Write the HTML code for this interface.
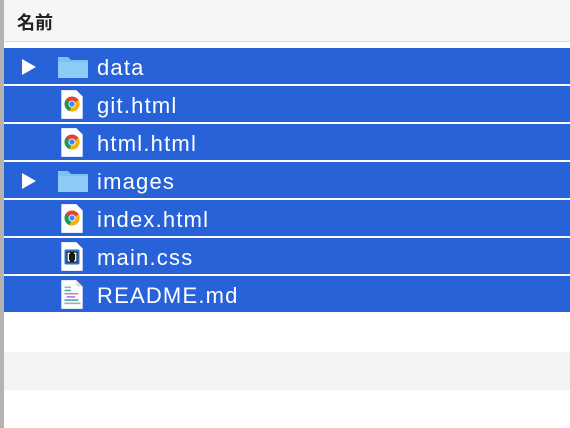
<!DOCTYPE html>
<html><head><meta charset="utf-8"><style>
body{margin:0;width:570px;height:428px;background:#fff;position:relative;overflow:hidden;font-family:"Liberation Sans","Noto Sans CJK JP",sans-serif}
.lb{position:absolute;left:0;top:0;width:4px;height:428px;background:#b3b3b3}
.hd{position:absolute;left:4px;top:0;right:0;height:41px;background:#f6f6f6;border-bottom:1px solid #d8d8d8}
.hd span{position:absolute;left:13px;top:9px;font-size:18px;color:#222;font-weight:bold}
.row{position:absolute;left:4px;right:0;height:36px;background:#2762d8;color:#fff;font-size:22px;letter-spacing:1.2px}
.row .t{position:absolute;left:93px;top:7px}
.tri{position:absolute;left:18px;top:11px;width:0;height:0;border-left:14px solid #fff;border-top:8px solid transparent;border-bottom:8px solid transparent}
.gb{position:absolute;left:4px;right:0;top:352px;height:38px;background:#f3f4f4}
svg{position:absolute}
</style></head><body>
<div class="lb"></div>
<div class="hd"><span>名前</span></div>

<div class="row" style="top:48px"><div class="tri"></div>
<svg style="left:53px;top:7px" width="32" height="24" viewBox="0 0 32 24"><path d="M1 2h10l3 3h17v18H1z" fill="#7cc1f2"/><path d="M1 7h30v16H1z" fill="#8ccbf5"/></svg>
<span class="t">data</span></div>

<div class="row" style="top:86px">
<svg style="left:56px;top:3px" width="24" height="31" viewBox="0 0 22 29"><path d="M1 1h14l6 6v21H1z" fill="#fff"/><circle cx="11" cy="14" r="7" fill="#db4437"/><path d="M11 14L5 10.5A7 7 0 0 0 9 20.7z" fill="#0f9d58"/><path d="M11 14l6-3.5A7 7 0 0 1 9 20.7z" fill="#f4b400"/><circle cx="11" cy="14" r="3.3" fill="#fff"/><circle cx="11" cy="14" r="2.5" fill="#4285f4"/></svg>
<span class="t">git.html</span></div>

<div class="row" style="top:124px">
<svg style="left:56px;top:3px" width="24" height="31" viewBox="0 0 22 29"><path d="M1 1h14l6 6v21H1z" fill="#fff"/><circle cx="11" cy="14" r="7" fill="#db4437"/><path d="M11 14L5 10.5A7 7 0 0 0 9 20.7z" fill="#0f9d58"/><path d="M11 14l6-3.5A7 7 0 0 1 9 20.7z" fill="#f4b400"/><circle cx="11" cy="14" r="3.3" fill="#fff"/><circle cx="11" cy="14" r="2.5" fill="#4285f4"/></svg>
<span class="t">html.html</span></div>

<div class="row" style="top:162px"><div class="tri"></div>
<svg style="left:53px;top:7px" width="32" height="24" viewBox="0 0 32 24"><path d="M1 2h10l3 3h17v18H1z" fill="#7cc1f2"/><path d="M1 7h30v16H1z" fill="#8ccbf5"/></svg>
<span class="t">images</span></div>

<div class="row" style="top:200px">
<svg style="left:56px;top:3px" width="24" height="31" viewBox="0 0 22 29"><path d="M1 1h14l6 6v21H1z" fill="#fff"/><circle cx="11" cy="14" r="7" fill="#db4437"/><path d="M11 14L5 10.5A7 7 0 0 0 9 20.7z" fill="#0f9d58"/><path d="M11 14l6-3.5A7 7 0 0 1 9 20.7z" fill="#f4b400"/><circle cx="11" cy="14" r="3.3" fill="#fff"/><circle cx="11" cy="14" r="2.5" fill="#4285f4"/></svg>
<span class="t">index.html</span></div>

<div class="row" style="top:238px">
<svg style="left:56px;top:3px" width="24" height="31" viewBox="0 0 22 29"><path d="M1 1h14l6 6v21H1z" fill="#fff"/><rect x="4" y="8" width="14" height="14" rx="1.5" fill="#2f6fb5"/><rect x="6" y="10" width="10" height="10" fill="#1a1a1a"/><path d="M9 11.5H7.5v7H9M13 11.5h1.5v7H13" stroke="#fff" fill="none" stroke-width="1.3"/></svg>
<span class="t">main.css</span></div>

<div class="row" style="top:276px">
<svg style="left:56px;top:3px" width="24" height="31" viewBox="0 0 22 29"><path d="M1 1h14l6 6v21H1z" fill="#fff"/><path d="M15 1v6h6" fill="#ddd"/><rect x="4" y="7" width="6" height="1.5" fill="#aaa"/><rect x="4" y="10" width="6" height="1.5" fill="#4aa"/><rect x="4" y="13" width="13" height="1.5" fill="#c88"/><rect x="6" y="16" width="8" height="1.5" fill="#a7f"/><rect x="4" y="19" width="13" height="1.5" fill="#4aa"/><rect x="4" y="22" width="15" height="1.5" fill="#aaa"/></svg>
<span class="t">README.md</span></div>

<div class="gb"></div>
</body></html>
